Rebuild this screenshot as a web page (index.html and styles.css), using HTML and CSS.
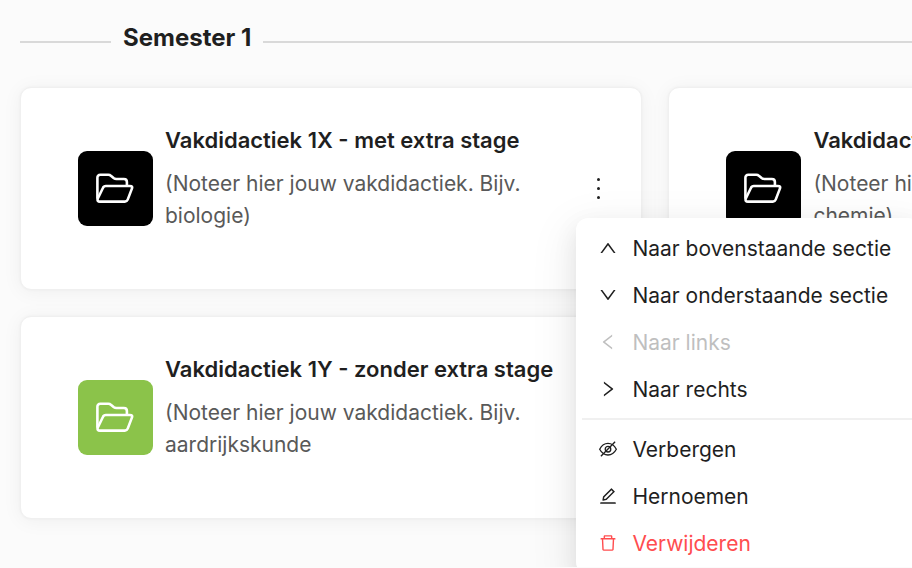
FILE: index.html
```html
<!DOCTYPE html>
<html lang="nl">
<head>
<meta charset="utf-8">
<meta name="viewport" content="width=device-width, initial-scale=1">
<title>Semester 1</title>
<link rel="stylesheet" href="styles.css">
</head>
<body>
<svg class="sprite" aria-hidden="true">
  <symbol id="folder" viewBox="0.6 0.2 40 32" fill="none" stroke="currentColor" stroke-width="2.6" stroke-linejoin="round">
    <path d="M2 26V5q0-3 3-3h8q1.5 0 2.5 1l3 2.5q1 .7 2.5.7h7.5q3 0 3 3V13"/>
    <path d="M2.300 26 7.500 15.200q.800-2 3-2h24q3 0 2 2.600l-4.200 11q-.800 2-2.800 2H4.500q-3 0-2.200-2.800z"/>
  </symbol>
</svg>
<main class="page">
  <header class="section-header"><h1>Semester 1</h1></header>
  <div class="cards">
    <article class="card">
      <span class="tile"><svg><use href="#folder"/></svg></span>
      <div class="card-text">
        <h2>Vakdidactiek 1X - met extra stage</h2>
        <p>(Noteer hier jouw vakdidactiek. Bijv. biologie)</p>
      </div>
      <div class="actions">
        <button class="more" type="button" aria-label="Acties" aria-expanded="true"><i></i><i></i><i></i></button>
        <div class="menu">
          <button type="button"><svg viewBox="0 0 1024 1024"><path d="M890.5 755.3L537.9 269.2c-12.8-17.6-39-17.6-51.7 0L133.5 755.3A8 8 0 00140 768h75c5.1 0 9.9-2.5 12.9-6.6L512 369.8l284.1 391.6c3 4.1 7.8 6.6 12.9 6.6h75c6.5 0 10.3-7.4 6.5-12.7z"/></svg>Naar bovenstaande sectie</button>
          <button type="button"><svg viewBox="0 0 1024 1024"><path d="M884 256h-75c-5.1 0-9.9 2.5-12.9 6.6L512 654.2 227.9 262.6c-3-4.1-7.8-6.6-12.9-6.6h-75c-6.5 0-10.3 7.4-6.5 12.7l352.6 486.1c12.8 17.6 39 17.6 51.7 0l352.6-486.1c3.9-5.3.1-12.7-6.4-12.7z"/></svg>Naar onderstaande sectie</button>
          <button type="button" disabled><svg viewBox="0 0 1024 1024"><path d="M724 218.3V141c0-6.7-7.7-10.4-12.9-6.3L260.3 486.8a31.86 31.86 0 000 50.3l450.8 352.1c5.3 4.1 12.9.4 12.9-6.3v-77.3c0-4.9-2.3-9.6-6.1-12.6l-360-281 360-281.1c3.8-3 6.1-7.7 6.1-12.6z"/></svg>Naar links</button>
          <button type="button"><svg viewBox="0 0 1024 1024"><path d="M765.7 486.8L314.9 134.7A7.97 7.97 0 00302 141v77.3c0 4.9 2.3 9.6 6.1 12.6l360 281.1-360 281.1c-3.9 3-6.1 7.7-6.1 12.6V883c0 6.7 7.7 10.4 12.9 6.3l450.8-352.1a31.96 31.96 0 000-50.4z"/></svg>Naar rechts</button>
          <hr>
          <button type="button"><svg viewBox="0 0 18 18"><g fill="none" stroke="currentColor" stroke-width="1.2"><path d="M1.500 9.200q2.800-5.200 7.500-5.200t7.500 5.200q-2.800 5.200-7.500 5.200T1.500 9.200z"/><circle cx="9" cy="9.200" r="2.500"/><path d="M2.600 15.600 15.400 2.400"/></g></svg>Verbergen</button>
          <button type="button"><svg viewBox="0 0 1024 1024"><path d="M257.7 752c2 0 4-.2 6-.5L431.9 722c2-.4 3.9-1.3 5.3-2.8l423.9-423.9a9.96 9.96 0 000-14.1L694.9 114.9c-1.9-1.9-4.4-2.9-7.1-2.9s-5.2 1-7.1 2.9L256.8 538.8c-1.5 1.5-2.4 3.3-2.8 5.3l-29.5 168.2a33.5 33.5 0 009.4 29.8c6.6 6.4 14.9 9.9 23.8 9.9zm67.4-174.4L687.8 215l73.3 73.3-362.7 362.6-88.9 15.7 15.6-89zM880 836H144c-17.7 0-32 14.3-32 32v36c0 4.4 3.6 8 8 8h784c4.4 0 8-3.6 8-8v-36c0-17.7-14.3-32-32-32z"/></svg>Hernoemen</button>
          <button type="button" class="danger"><svg viewBox="0 0 1024 1024"><path d="M360 184h-8c4.400 0 8-3.600 8-8v8h304v-8c0 4.400 3.600 8 8 8h-8v72h72v-80c0-35.300-28.700-64-64-64H352c-35.300 0-64 28.700-64 64v80h72v-72zm504 72H160c-17.700 0-32 14.300-32 32v32c0 4.400 3.600 8 8 8h60.400l24.700 523c1.600 34.100 29.800 61 63.900 61h454c34.200 0 62.300-26.800 63.900-61l24.700-523H888c4.400 0 8-3.600 8-8v-32c0-17.700-14.300-32-32-32zM731.300 840H292.700l-24.200-512h487l-24.200 512z"/></svg>Verwijderen</button>
        </div>
      </div>
    </article>
    <article class="card">
      <span class="tile"><svg><use href="#folder"/></svg></span>
      <div class="card-text">
        <h2>Vakdidactiek 1X - met extra stage</h2>
        <p>(Noteer hier jouw vakdidactiek. Bijv. chemie)</p>
      </div>
      <div class="actions"><button class="more" type="button" aria-label="Acties"><i></i><i></i><i></i></button></div>
    </article>
    <article class="card">
      <span class="tile green"><svg><use href="#folder"/></svg></span>
      <div class="card-text">
        <h2>Vakdidactiek 1Y - zonder extra stage</h2>
        <p>(Noteer hier jouw vakdidactiek. Bijv. aardrijkskunde</p>
      </div>
      <div class="actions"><button class="more" type="button" aria-label="Acties"><i></i><i></i><i></i></button></div>
    </article>
  </div>
</main>
</body>
</html>
```
FILE: styles.css
```css
* { box-sizing: border-box; }
body {
  margin: 0;
  overflow: hidden;
  background: #fbfbfb;
  color: #1f1f1f;
  font-family: Inter, "Liberation Sans", sans-serif;
  font-size: 21px;
  line-height: 32px;
}
.sprite { position: absolute; width: 0; height: 0; }
.page { padding: 22px 0 48px 20px; }
.section-header { display: flex; align-items: center; gap: 12px; margin-bottom: 33px; }
.section-header::before, .section-header::after { content: ""; height: 2px; margin-top: 7px; background: #d9d9d9; }
.section-header::before { flex: none; width: 91px; }
.section-header::after { flex: 1; }
h1, h2, p { margin: 0; }
h1 { font-size: 24px; line-height: 32px; font-weight: 700; }
.cards { display: grid; grid-template-columns: repeat(2, calc(70% - 2px)); gap: 26px; }
.card {
  display: flex;
  align-items: center;
  gap: 12px;
  min-height: 203px;
  padding: 36px 28px 36px 57px;
  border: 1px solid #f0f0f0;
  border-radius: 11px;
  background: #fff;
  box-shadow: 0 0 3px rgba(0, 0, 0, 0.04), 0 2px 20px rgba(0, 0, 0, 0.05);
}
.tile {
  display: flex;
  align-items: center;
  justify-content: center;
  flex: none;
  width: 75px;
  height: 75px;
  border-radius: 9px;
  background: #000;
  color: #fff;
}
.tile.green { background: #8bc34a; }
.tile svg { width: 40px; height: 32px; }
.card-text { flex: 1; min-width: 0; padding-bottom: 21px; }
h2 { margin-bottom: 12px; font-size: 22px; line-height: 32px; font-weight: 600; white-space: nowrap; }
p { color: #595959; }
.actions { position: relative; flex: none; }
.more {
  display: flex;
  flex-direction: column;
  align-items: center;
  justify-content: center;
  gap: 6px;
  width: 30px;
  height: 48px;
  padding: 0;
  border: 0;
  background: none;
}
.more i { width: 3px; height: 3px; border-radius: 50%; background: #1f1f1f; }
.menu {
  position: absolute;
  top: 100%;
  left: -7px;
  z-index: 2;
  min-width: 344px;
  margin-top: 5px;
  padding: 8px 6px 6px;
  border-radius: 12px;
  background: #fff;
  box-shadow: 0 9px 24px rgba(0, 0, 0, 0.08), 0 4px 9px -6px rgba(0, 0, 0, 0.12), 0 14px 42px 12px rgba(0, 0, 0, 0.05);
}
.menu button {
  display: flex;
  align-items: center;
  gap: 14px;
  width: 100%;
  height: 47px;
  padding: 0 16px;
  border: 0;
  background: none;
  color: inherit;
  font: inherit;
  white-space: nowrap;
}
.menu svg { flex: none; width: 20px; height: 20px; margin-bottom: 2px; fill: currentColor; }
.menu button:disabled { color: #bfbfbf; }
.menu .danger { color: #ff4d4f; }
.menu hr { height: 2px; margin: 4px 0 7px; border: 0; background: #f0f0f0; }
```
